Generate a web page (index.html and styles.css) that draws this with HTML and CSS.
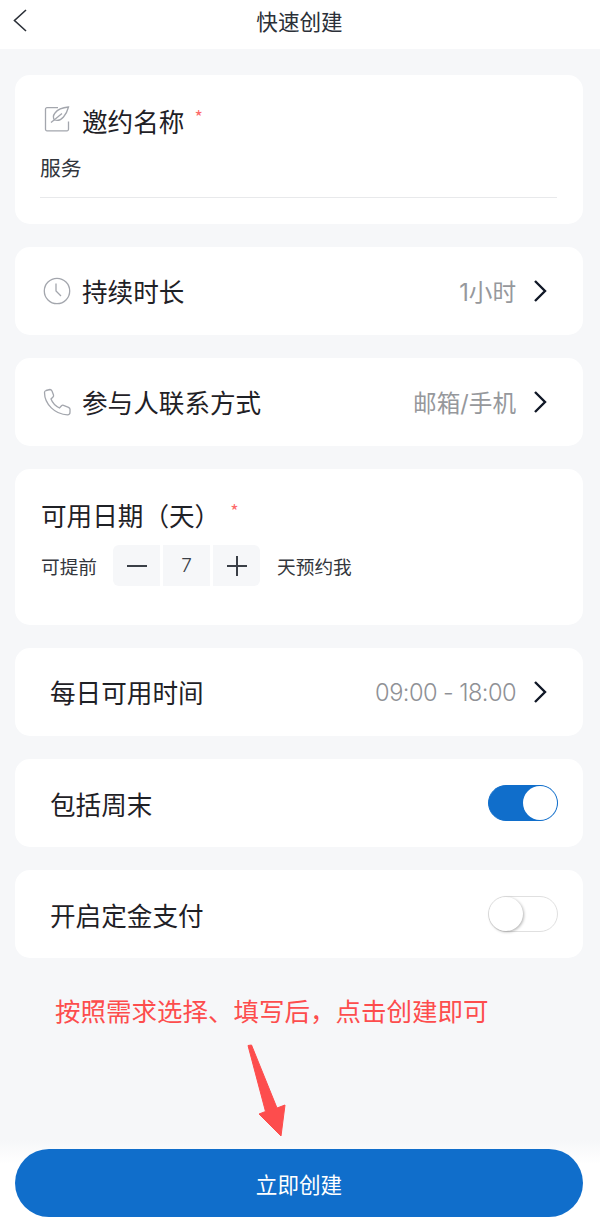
FILE: index.html
```html
<!DOCTYPE html>
<html lang="zh-CN">
<head>
  <meta charset="UTF-8">
  <title>快速创建</title>
  <link rel="stylesheet" href="styles.css">
</head>
<body>
  <header class="top-bar">
    <svg class="back-icon" width="14" height="23" viewBox="0 0 14 23"><path d="M13 1 1.500 11.500 13 22" fill="none" stroke="#2b3038" stroke-width="1.600"/></svg>
    <span class="top-title">快速创建</span>
  </header>

  <main class="content">
    <section class="card card-name">
      <div class="label-row">
        <svg class="row-icon" width="28" height="28" viewBox="0 0 28 28" fill="none" stroke="#a3a6ad" stroke-width="1.300">
          <path d="M15 2.700H4a1.500 1.500 0 0 0-1.500 1.500v20.100A1.500 1.500 0 0 0 4 25.800h20a1.500 1.500 0 0 0 1.500-1.500V16.500"/>
          <path d="M25.500 2C20 2.500 15 4 12 8c-2 2.500-2 5-.5 7 3 1 6.500 0 9-3 2.500-3 4-6 5-10Z"/>
          <path d="M8 17.500 19 8.500"/>
        </svg>
        <span class="label">邀约名称</span>
        <span class="required">*</span>
      </div>
      <div class="name-value">服务</div>
    </section>

    <section class="card row">
      <svg class="row-icon" width="28" height="28" viewBox="0 0 28 28" fill="none" stroke="#a3a6ad" stroke-width="1.300">
        <circle cx="14" cy="14" r="12.700"/>
        <path d="M13 6.500V14l5 5"/>
      </svg>
      <span class="label">持续时长</span>
      <span class="value">1小时</span>
      <svg class="chevron" width="14" height="22" viewBox="0 0 14 22"><path d="M2 1 12 11 2 21" fill="none" stroke="#111827" stroke-width="2.400"/></svg>
    </section>

    <section class="card row">
      <svg class="row-icon" width="28" height="28" viewBox="0 0 28 28" fill="none" stroke="#a3a6ad" stroke-width="1.300">
        <path d="M3 2.500 7 1.500c1 0 1.500.5 2 1.500l1.500 4c.3 1 0 1.500-.5 2L8 11c1.500 4 4.500 7 8.500 9l2-2.300c.6-.6 1.200-.7 2-.4l5 2c1 .5 1.500 1.200 1.500 2v3c0 1.500-1 2.500-2.500 2.500C12 26.500 1.500 16 1.500 4.500c0-1 .5-1.700 1.500-2Z"/>
      </svg>
      <span class="label">参与人联系方式</span>
      <span class="value">邮箱/手机</span>
      <svg class="chevron" width="14" height="22" viewBox="0 0 14 22"><path d="M2 1 12 11 2 21" fill="none" stroke="#111827" stroke-width="2.400"/></svg>
    </section>

    <section class="card card-days">
      <div class="label-row">
        <span class="label">可用日期&#xFF08;天&#xFF09;</span>
        <span class="required">*</span>
      </div>
      <div class="stepper-row">
        <span class="stepper-text">可提前</span>
        <div class="stepper">
          <span class="step step-minus"><svg width="20" height="20" viewBox="0 0 20 20"><path d="M0 10h20" stroke="#3a3f47" stroke-width="2"/></svg></span>
          <span class="step step-num">7</span>
          <span class="step step-plus"><svg width="20" height="20" viewBox="0 0 20 20"><path d="M0 10h20M10 0v20" stroke="#3a3f47" stroke-width="2"/></svg></span>
        </div>
        <span class="stepper-text">天预约我</span>
      </div>
    </section>

    <section class="card row row-plain">
      <span class="label">每日可用时间</span>
      <span class="value value-time">09:00 - 18:00</span>
      <svg class="chevron" width="14" height="22" viewBox="0 0 14 22"><path d="M2 1 12 11 2 21" fill="none" stroke="#111827" stroke-width="2.400"/></svg>
    </section>

    <section class="card row row-plain row-switch">
      <span class="label">包括周末</span>
      <span class="switch switch-on"><span class="knob"></span></span>
    </section>

    <section class="card row row-plain row-switch">
      <span class="label">开启定金支付</span>
      <span class="switch"><span class="knob"></span></span>
    </section>

    <p class="note">按照需求选择、填写后&#xFF0C;点击创建即可</p>
    <svg class="arrow" width="42" height="94" viewBox="0 0 42 94"><path d="M2 1.500 5.500 1 31 64 39 61 35 92 13 70 19.500 67.500Z" fill="#fd4d4d" stroke="#fd4d4d" stroke-width="1" stroke-linejoin="round"/></svg>
  </main>

  <footer class="bottom-bar">
    <button class="create-btn">立即创建</button>
  </footer>
</body>
</html>
```

FILE: styles.css
```css
body {
  margin: 0;
  height: 1221px;
  overflow: hidden;
  display: flex;
  flex-direction: column;
  background: #f6f7f9;
  font-family: "Noto Sans CJK SC", "Noto Sans", sans-serif;
  color: #1f2126;
}
.top-bar {
  display: flex;
  justify-content: center;
  flex: none;
  height: 49px;
  background: #fff;
  position: relative;
}
.back-icon {
  position: absolute;
  left: 13px;
  top: 9px;
}
.top-title {
  font-size: 21.6px;
  line-height: 41px;
  margin-left: -1px;
  color: #2b3038;
}
.content {
  flex: 1;
  display: flex;
  flex-direction: column;
  gap: 23px;
  padding: 26px 17px 0 15px;
}
.card {
  background: #fff;
  border-radius: 15px;
}
.card-name {
  height: 149px;
  box-sizing: border-box;
  padding: 26px 26px 0 25px;
}
.label-row {
  display: flex;
  align-items: center;
  height: 40px;
}
.card-name .label-row .row-icon {
  margin: -4px 11px 0 3px;
}
.label {
  font-size: 25.6px;
  line-height: 40px;
}
.required {
  color: #fd6a6a;
  font-size: 18px;
  line-height: 18px;
  margin: -10px 0 0 10px;
}
.name-value {
  font-size: 20.8px;
  line-height: 34px;
  color: #33363c;
  margin-top: 9px;
  height: 47px;
  border-bottom: 1px solid #e8e9eb;
}
.row {
  display: flex;
  align-items: center;
  height: 88px;
  box-sizing: border-box;
  padding: 0 36px 0 28px;
}
.row .row-icon {
  margin-right: 11px;
}
.row-plain {
  padding-left: 35px;
}
.row-switch .label {
  margin-top: 2px;
}
.value {
  margin-left: auto;
  font-size: 23.6px;
  color: #96989c;
  font-family: "Inter", "Noto Sans CJK SC", sans-serif;
}
.value-time {
  font-weight: 300;
  letter-spacing: -0.55px;
  color: #8f9196;
}
.chevron {
  margin-left: 17px;
}
.card-days {
  height: 156px;
  box-sizing: border-box;
  padding: 26px 25px 0 26px;
}
.stepper-row {
  display: flex;
  align-items: center;
  margin-top: 10px;
}
.stepper-text {
  font-size: 18.7px;
  color: #33363c;
}
.stepper {
  display: flex;
  gap: 3px;
  margin: 0 17px 0 16px;
}
.step {
  display: flex;
  align-items: center;
  justify-content: center;
  width: 47px;
  height: 41px;
  background: #f6f7f9;
  font-size: 19px;
  font-weight: 300;
  color: #3a3f47;
  font-family: "Inter", sans-serif;
}
.step-num {
  padding-bottom: 1px;
  box-sizing: border-box;
}
.step-minus {
  border-radius: 6px 0 0 6px;
}
.step-plus {
  border-radius: 0 6px 6px 0;
}
.switch {
  margin-left: auto;
  margin-right: -11px;
  width: 70px;
  height: 36px;
  box-sizing: border-box;
  border-radius: 18px;
  border: 1px solid #e0e0e0;
  background: #fff;
  display: flex;
}
.knob {
  width: 34px;
  height: 34px;
  border-radius: 50%;
  background: #fff;
  box-shadow: 1px 1px 3px rgba(0,0,0,0.3);
}
.switch-on {
  background: #106ecb;
  border-color: #106ecb;
  justify-content: flex-end;
}
.switch-on .knob {
  box-shadow: none;
}
.note {
  margin: 9px 0 0 40px;
  font-size: 25.5px;
  line-height: 40px;
  color: #fd4d4d;
}
.arrow {
  margin: -9px 0 0 231px;
}
.bottom-bar {
  flex: none;
  height: 81px;
  box-sizing: border-box;
  padding: 9px 17px 4px 15px;
  background: linear-gradient(#f6f7f9, #fff 24px);
}
.create-btn {
  display: block;
  width: 568px;
  height: 68px;
  border: none;
  border-radius: 34px;
  background: #106ecb;
  color: #fff;
  font-size: 21.6px;
  font-family: inherit;
}
```
